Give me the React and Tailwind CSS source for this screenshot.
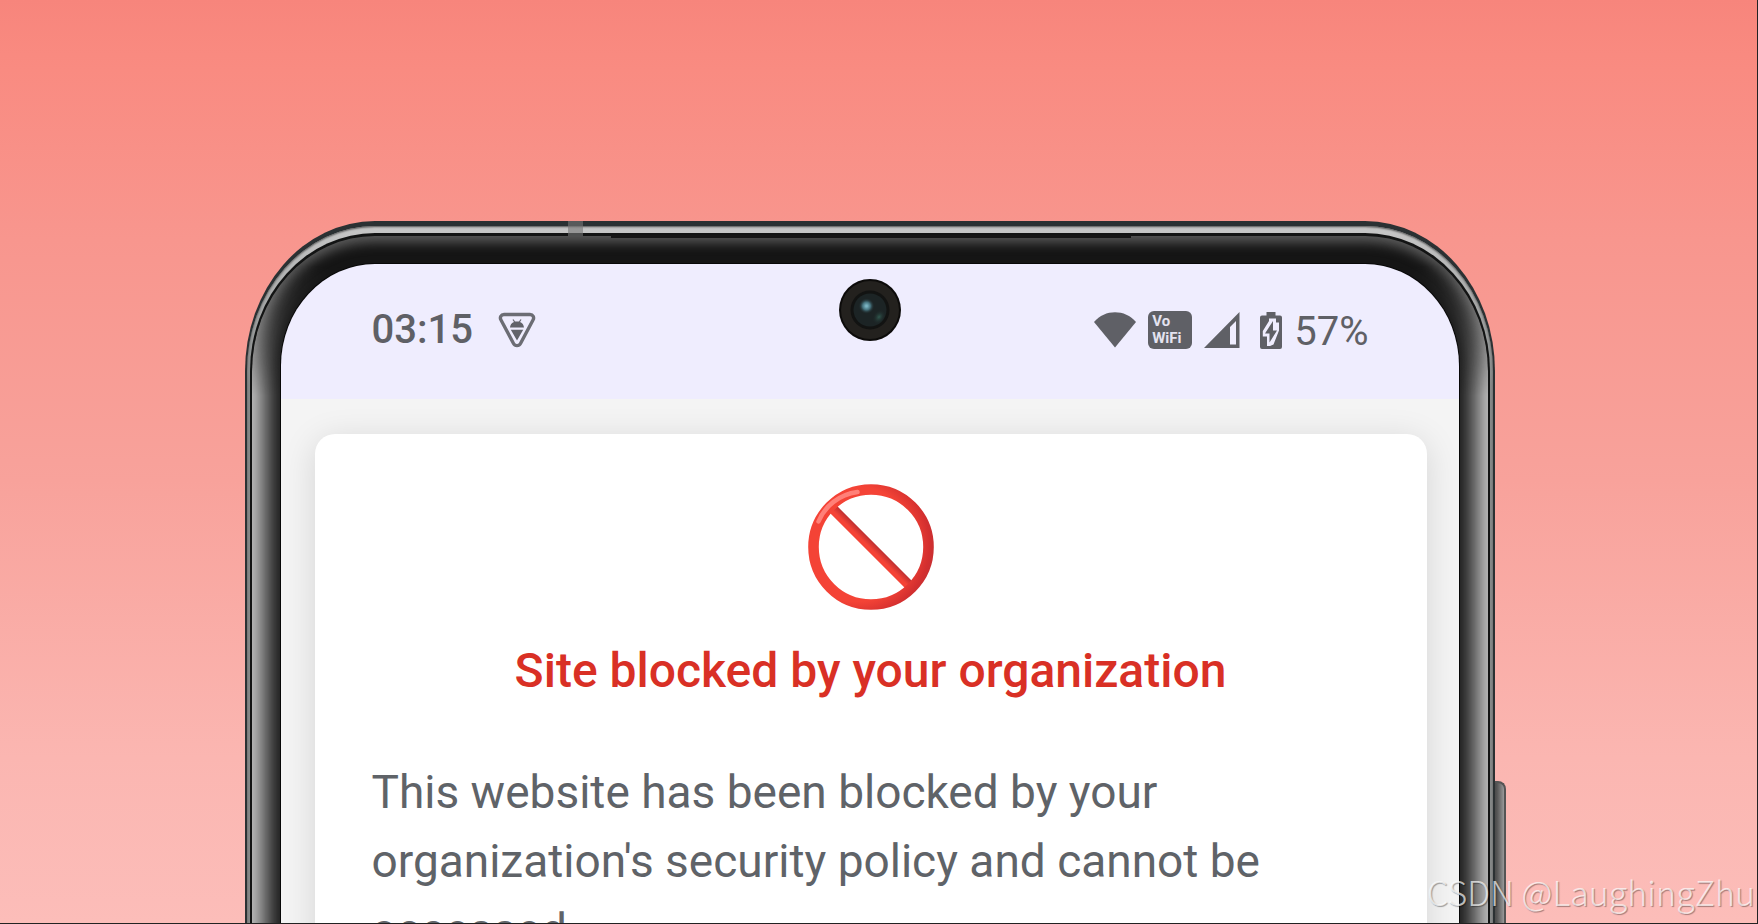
import React from "react";

function ThreatIcon() {
  return (
    <svg viewBox="0 0 38 36" className="h-9 w-[38px]" aria-hidden="true">
      <path d="M6 2.500h26c3 0 4.500 3 3 5.500L22.500 31.500c-1.500 2.800-5.500 2.800-7 0L3 8C1.500 5.500 3 2.500 6 2.500Z" fill="none" stroke="#6c6d74" strokeWidth="3.400" />
      <path d="M15 7.500l2 3M23 7.500l-2 3" stroke="#6c6d74" strokeWidth="1.300" fill="none" />
      <path d="M12 15.500c.5-3.500 2.500-6 7-6s6.500 2.500 7 6ZM12.800 17.800h12.400L19 28.500Z" fill="#62636a" />
    </svg>
  );
}

function WifiIcon() {
  return (
    <svg viewBox="0 0 42 36" className="h-9 w-[42px]" aria-hidden="true">
      <path d="M0 10C11-3 31-3 42 10L21 35.500Z" fill="#5f6066" />
    </svg>
  );
}

function SignalIcon() {
  return (
    <svg viewBox="0 0 36 36" className="h-9 w-9" aria-hidden="true">
      <path fillRule="evenodd" d="M35.500 0v36H0ZM32 9l-6 6V32.500h6Z" fill="#5f6066" />
    </svg>
  );
}

function BatteryIcon() {
  return (
    <svg viewBox="0 0 22 37" className="h-[37px] w-[22px]" aria-hidden="true">
      <path d="M6.500 0h9v3.500H20a2 2 0 0 1 2 2V35a2 2 0 0 1-2 2H2a2 2 0 0 1-2-2V5.500a2 2 0 0 1 2-2h4.500Z" fill="#5f6066" />
      <path d="M9 6.500h7v4h3v8l-5.500 14-3.500 1.500H7v-9.500H2.800v-5.500l6.200-10Z" fill="#efedfe" />
      <path d="M13 9v9.500h4L9.500 30.500v-9H5Z" fill="#5f6066" />
    </svg>
  );
}

function ProhibitedIcon() {
  return (
    <svg viewBox="0 0 126 126" className="h-[126px] w-[126px]" role="img" aria-label="Blocked">
      <defs>
        <radialGradient id="ring" gradientUnits="userSpaceOnUse" cx="48" cy="60" r="80">
          <stop offset="0.720" stopColor="#f44336" />
          <stop offset="0.920" stopColor="#d32f2f" />
          <stop offset="1" stopColor="#c62f32" />
        </radialGradient>
        <linearGradient id="bar" gradientUnits="userSpaceOnUse" x1="58" y1="68" x2="67" y2="59">
          <stop offset="0.450" stopColor="#f44336" />
          <stop offset="1" stopColor="#b92d30" />
        </linearGradient>
      </defs>
      <path d="M25.500 25.500 101 101" stroke="url(#bar)" strokeWidth="10" />
      <circle cx="63" cy="63" r="57.500" fill="none" stroke="url(#ring)" strokeWidth="10.600" />
      <path d="M10.500 37.500C17 22 31 10.500 49.500 8" fill="none" stroke="#ff8078" strokeWidth="4.500" strokeLinecap="round" />
    </svg>
  );
}

function Camera() {
  return (
    <svg viewBox="0 0 62 62" className="absolute top-[15px] left-1/2 h-[62px] w-[62px] -translate-x-1/2" aria-hidden="true">
      <defs>
        <radialGradient id="glint">
          <stop offset="0.100" stopColor="#7ab4c2" />
          <stop offset="0.500" stopColor="#44707b" />
          <stop offset="1" stopColor="#1c2526" stopOpacity="0" />
        </radialGradient>
        <radialGradient id="glow">
          <stop offset="0" stopColor="#31594f" />
          <stop offset="1" stopColor="#1c2526" stopOpacity="0" />
        </radialGradient>
      </defs>
      <circle cx="31" cy="31" r="31" fill="#0c0b0a" />
      <circle cx="31" cy="31" r="29" fill="#23211e" />
      <circle cx="31" cy="31" r="19.500" fill="#121312" />
      <circle cx="31" cy="31" r="16.500" fill="#1c2425" />
      <circle cx="27.500" cy="27" r="8" fill="url(#glint)" />
      <ellipse cx="40" cy="38" rx="6" ry="8" transform="rotate(35 40 38)" fill="url(#glow)" />
    </svg>
  );
}

function StatusBar() {
  return (
    <header className="relative flex h-[135px] shrink-0 items-start justify-between bg-[#efedfe] pt-[46px] pr-[90px] pl-[91px] text-[40px] leading-9 text-[#5f6066]">
      <div className="flex items-center gap-[25px] pt-0.5 font-medium">
        <time>03:15</time>
        <ThreatIcon />
      </div>
      <Camera />
      <div className="flex items-center gap-3">
        <WifiIcon />
        <div className="flex h-[38px] w-11 flex-col justify-center rounded-md bg-[#5f6066] pl-1 text-[15px] leading-[17px] font-bold text-[#e4e3f0]">
          <span>Vo</span>
          <span>WiFi</span>
        </div>
        <div className="flex items-center gap-5">
          <SignalIcon />
          <div className="flex items-center gap-3">
            <BatteryIcon />
            <span className="pt-1">57%</span>
          </div>
        </div>
      </div>
    </header>
  );
}

function BlockedCard() {
  return (
    <main className="bg-[#f4f4f4] pt-[35px] pr-8 pl-[34px]">
      <section className="flex flex-col items-center rounded-t-[20px] bg-white px-[57px] pt-[50px] shadow-[0_6px_34px_rgba(0,0,0,0.13)]">
        <ProhibitedIcon />
        <h1 className="mt-[27px] text-center text-[48px] leading-[68px] font-medium text-[#d93025]">
          Site blocked by your organization
        </h1>
        <p className="mt-[53px] w-full text-[46px] leading-[69px] text-[#5f6368]">
          This website has been blocked by your organization's security policy and cannot be accessed.
        </p>
      </section>
    </main>
  );
}

function Phone() {
  return (
    <div className="relative w-[1250px] max-w-full shrink-0">
      <div className="absolute top-[560px] -right-[11px] h-[400px] w-4 rounded-tr-lg border-t-2 border-r-2 border-[#555] bg-linear-to-r from-[#333] via-[#555] to-[#999]" />
      <div className="relative rounded-t-[130px_150px] bg-[#2b3133] px-[2px] pt-[5px]">
        <div className="rounded-t-[128px_145px] bg-linear-to-b from-[#c8c8c8] to-[#858888] to-[160px] px-[3px] pt-[7px] shadow-[inset_0_1px_2px_#555]">
          <div className="rounded-t-[125px_138px] bg-[#131414] px-[2px] pt-[3px]">
            <div className="relative rounded-t-[123px_135px] bg-[#151515] px-[29px] pt-7 shadow-[inset_0_6px_12px_#5c5c5c]">
              <div className="absolute inset-0 rounded-t-[123px_135px] mask-[linear-gradient(to_bottom,transparent_30px,black_160px)] shadow-[inset_0_0_24px_13px_#c8c8c8]" />
              <div className="absolute -top-[15px] left-[316px] h-[15px] w-[15px] bg-[#777]/60" />
              <div className="absolute -top-px left-[359px] h-[3px] w-[520px] bg-[#161616]" />
              <div className="relative flex flex-col overflow-hidden rounded-t-[94px_102px] shadow-[0_0_0_1px_#080808]">
                <StatusBar />
                <BlockedCard />
              </div>
            </div>
          </div>
        </div>
      </div>
    </div>
  );
}

export default function App() {
  return (
    <div className="relative flex h-screen justify-center overflow-hidden border-r border-b border-[#222] bg-[linear-gradient(to_bottom,#f7857c_0%,#f98a80_6%,#f8968e_26%,#f8a29b_52%,#fbb6b1_82%,#fcbdb9_100%)] pt-[221px] pr-[18px] font-['Roboto',sans-serif]">
      <Phone />
      <div className="absolute right-0.5 bottom-2 font-['Noto_Sans_CJK_SC',sans-serif] text-[34px] leading-[46px] font-light text-white/70 [text-shadow:1px_1px_1px_rgba(0,0,0,0.35)]">
        CSDN @LaughingZhu
      </div>
    </div>
  );
}
